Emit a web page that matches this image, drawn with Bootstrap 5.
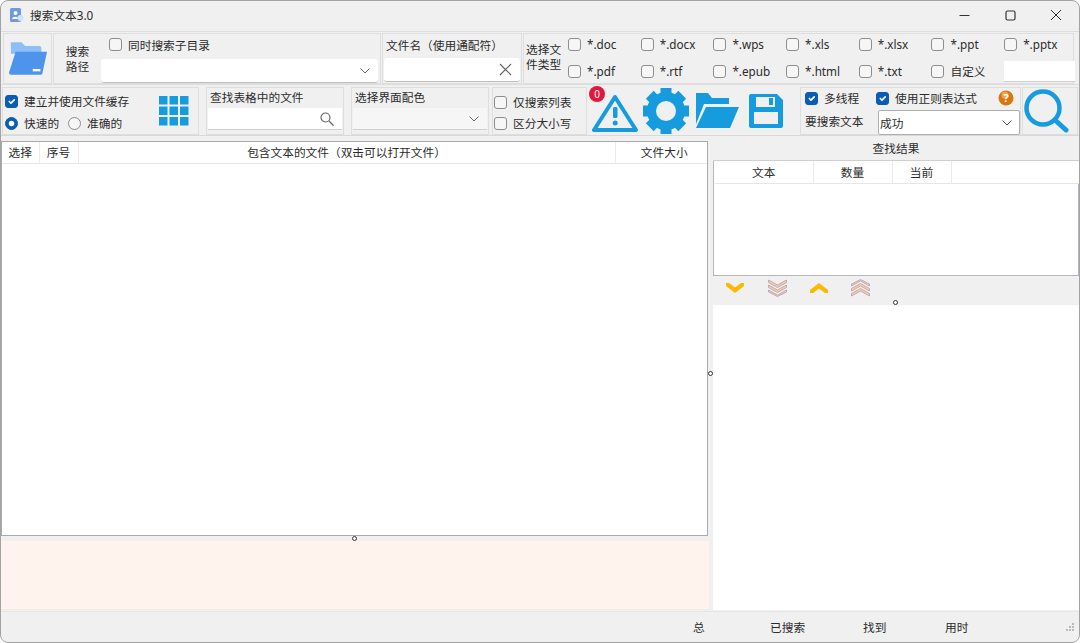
<!DOCTYPE html>
<html lang="zh"><head><meta charset="utf-8"><title>搜索文本3.0</title>
<link rel="stylesheet" href="https://cdn.jsdelivr.net/npm/bootstrap@5.3.0/dist/css/bootstrap.min.css">
<style>
html,body{height:100%;margin:0;background:#fff;overflow:hidden}
body{font:11.7px/16px "Noto Sans","Noto Sans CJK SC",sans-serif;color:#2b2b2b}
.win{width:1080px;height:643px;background:#f0f0f0;border:1px solid #a3a3a3;border-radius:8px;overflow:hidden;position:relative}
.ttl{height:30px;padding:0 0 2px 8px;gap:5px}
.wb{width:46px;height:28px}
.strip{height:54px;padding:1px 3px 0 2px;gap:1px;border-top:1px solid #ddd;border-bottom:1px solid #ddd}
.strip2{height:50px;padding:1px 0 0 1px;border-bottom:1px solid #d8d8d8;margin-top:1px}
.pn{background:#f0f0f0;border:1px solid #dedede;flex:none}
.pnf{width:49px}
.pnp{width:328px;padding:2px 2px 2px 0}
.lbl2{width:47px;text-align:center;line-height:15px}
.subck{height:17px;margin-bottom:6px;margin-left:8px}
.pnn{width:140px;padding:1px}
.pnnt{height:23px;line-height:20px;padding-left:2px}
.pnt{width:551px;padding-top:0}
.typel{width:44px;line-height:15px;padding-left:2px;margin-top:8px;flex:none}
.tgrid{display:grid;grid-template-columns:repeat(6,72.7px) 71px;grid-template-rows:20px 34px;align-items:center}
.ck{gap:6px;white-space:nowrap;display:flex;align-items:center;line-height:16px}
.ck .form-check-input{width:13px;height:13px;margin:0;border:1px solid #8d8d8d;border-radius:3px;background-color:#f6f6f6;flex:none}
.ck .form-check-input[type=radio]{border-radius:50%}
.ck .form-check-input:checked{background-color:#0a5cb4;border-color:#0a5cb4}
.inp{background:#fff;height:24px;border-bottom:1px solid #bdbdbd;border-radius:3px;padding:0 8px 0 5px;display:flex;align-items:center;justify-content:space-between}
.inp2{background:#fff;height:22px;border-bottom:1px solid #cfcfcf;padding:0 8px 0 5px;display:flex;align-items:center;justify-content:flex-end}
.inp2s{height:21px}
.inpc{background:#f6f6f6}
.cmb{width:142px;height:25px;border:1px solid #aeaeae;border-radius:2px;padding:0 7px 0 1px}
.p1{width:197px;padding:2px 0 0 2px;margin-right:7px}
.ckh{height:22px}
.rad{margin-top:3px;gap:9px}
.gridi{margin:6px 9px 0 0;flex:none}
.p2{width:138px;padding:1px;margin-right:7px}
.p3{width:138px;padding:1px;margin-right:3px}
.ptl{height:19px;line-height:16px;padding-left:2px}
.p4{width:95px;padding:4px 0 0 1px;margin-right:3px}
.ck20{height:20px}
.ck18{height:18px;margin-top:2px}
.tools{width:210px;position:relative;padding-left:2px;flex:none}
.t2{margin-left:5px}.t3{margin-left:6px}.t4{margin-left:9px}
.p6{width:221px;padding:0 0 0 4px}
.r20{height:20px}
.r2{margin-top:2px}
.l73{width:73px;margin-bottom:4px}
.ms17{margin-left:17px}
.help{margin-right:6px;margin-left:auto}
.p7{width:56px;margin-left:1px;padding:1px 0 0 1px}
.main{height:475px}
.lft{width:709px;flex:none}
.tb1{height:395px;margin:5px 0 0 0;background:#fff;border:1px solid #a9a9a9;width:707px}
.tb1 table,.tb2 table{table-layout:fixed;margin:0;border-collapse:collapse}
.tb1 th,.tb2 th{font-weight:400;font-size:11.7px;text-align:center;vertical-align:middle;padding:0;color:#2b2b2b;border:0;border-right:1px solid #eaeaea;border-bottom:1px solid #e6e6e6;background:#fff}
.tb1 th{height:21px}
.tb2 th{height:22px}
.w705{width:705px}.w364{width:364px}
.c37{width:37px}.c39{width:39px}.c537{width:537px}
.c98{width:98px}.c79{width:79px}.c59{width:59px}
.lastc{border-right:0!important}
.tb1 th.lastf{padding-left:6px;border-right:0}
.peach{height:69px;margin-top:5px;background:#fff3ee;border-bottom:1px solid #f3ebe8;width:708px}
.rgt{width:366px;margin-left:3px;flex:none}
.rh{height:25px;border-bottom:1px solid #cfcfcf;text-align:center;line-height:24px}
.tb2{height:115px;background:#fff;border:1px solid #b5b5bd;border-top:0;padding:0 1px}
.tl2{height:29px;padding:0 0 5px 12px}
.tl2 svg{margin-right:23px}
.tl2 svg.sq{margin-right:22px}
.wh{height:305px;background:#fff}
.stat{height:31px;border-top:1px solid #e6e6e6;position:relative}
.stat span{flex:none}
.s1{margin-left:692px;width:77px}.s2{width:93px}.s3{width:81px}.s4{margin-left:1px}
.dot{position:absolute;width:5px;height:5px;border:1.2px solid #333;border-radius:50%;background:#fff}
.d1{left:351px;top:535px}.d2{left:707px;top:370px}.d3{left:892px;top:299px}
.bdg{position:absolute;left:-1px;top:-1px;width:16px;height:16px;border-radius:50%;background:#e0183c;color:#fff;font-size:10px;line-height:16px;text-align:center}
</style></head><body>
<div class="win d-flex flex-column">
 <div class="ttl d-flex align-items-center">
  <svg width="16" height="16" viewBox="0 0 16 16"><rect x="1" y="1" width="11" height="14" rx="1.5" fill="#6d9bdc"/><circle cx="6.5" cy="6" r="2" fill="#fff"/><path d="M3 12c.5-3 6-3 6.500 0z" fill="#fff"/><circle cx="11.500" cy="11" r="3" fill="#cfe3f7"/></svg>
  <span>搜索文本3.0</span>
  <div class="ms-auto d-flex">
   <div class="wb d-flex align-items-center justify-content-center"><svg width="11" height="11"><path d="M.5 5.500h10" stroke="#333"/></svg></div>
   <div class="wb d-flex align-items-center justify-content-center"><svg width="11" height="11"><rect x="1" y="1" width="9" height="9" rx="1.500" fill="none" stroke="#333" stroke-width="1.200"/></svg></div>
   <div class="wb d-flex align-items-center justify-content-center"><svg width="12" height="12"><path d="M1 1l10 10M11 1L1 11" stroke="#333"/></svg></div>
  </div>
 </div>

 <div class="strip d-flex">
  <div class="pn pnf d-flex align-items-center justify-content-center">
   <svg width="40" height="35" viewBox="0 0 42 36"><path d="M3 1h11l4 4h15a2 2 0 0 1 2 2v6H3z" fill="#8fbdf8"/><path d="M8 11h33l-5 23a2 2 0 0 1-2 1H3a2 2 0 0 1-2-2z" fill="#4f94ec"/><rect x="26" y="29" width="8" height="2.500" fill="#fff"/></svg>
  </div>
  <div class="pn pnp d-flex">
   <div class="lbl2 align-self-center">搜索<br>路径</div>
   <div class="flex-grow-1">
    <label class="ck subck"><input class="form-check-input" type="checkbox">同时搜索子目录</label>
    <div class="inp"><span></span><svg width="10" height="6"><path d="M.5.500L5 5l4.500-4.500" fill="none" stroke="#666"/></svg></div>
   </div>
  </div>
  <div class="pn pnn">
   <div class="pnnt">文件名（使用通配符）</div>
   <div class="inp"><span></span><svg width="13" height="13"><path d="M1 1l11 11M12 1L1 12" stroke="#666" stroke-width="1.200"/></svg></div>
  </div>
  <div class="pn pnt d-flex">
   <div class="typel">选择文<br>件类型</div>
   <div class="tgrid">
    <label class="ck"><input class="form-check-input" type="checkbox">*.doc</label>
    <label class="ck"><input class="form-check-input" type="checkbox">*.docx</label>
    <label class="ck"><input class="form-check-input" type="checkbox">*.wps</label>
    <label class="ck"><input class="form-check-input" type="checkbox">*.xls</label>
    <label class="ck"><input class="form-check-input" type="checkbox">*.xlsx</label>
    <label class="ck"><input class="form-check-input" type="checkbox">*.ppt</label>
    <label class="ck"><input class="form-check-input" type="checkbox">*.pptx</label>
    <label class="ck"><input class="form-check-input" type="checkbox">*.pdf</label>
    <label class="ck"><input class="form-check-input" type="checkbox">*.rtf</label>
    <label class="ck"><input class="form-check-input" type="checkbox">*.epub</label>
    <label class="ck"><input class="form-check-input" type="checkbox">*.html</label>
    <label class="ck"><input class="form-check-input" type="checkbox">*.txt</label>
    <label class="ck"><input class="form-check-input" type="checkbox">自定义</label>
    <div class="inp2 inp2s"></div>
   </div>
  </div>
 </div>

 <div class="strip2 d-flex">
  <div class="pn p1 d-flex">
   <div class="flex-grow-1">
    <label class="ck ckh"><input class="form-check-input" type="checkbox" checked>建立并使用文件缓存</label>
    <div class="d-flex rad">
     <label class="ck"><input class="form-check-input" type="radio" name="m" checked>快速的</label>
     <label class="ck"><input class="form-check-input" type="radio" name="m">准确的</label>
    </div>
   </div>
   <svg width="30" height="30" viewBox="0 0 30 30" class="gridi" fill="#179bdf"><rect width="8.500" height="8.500"/><rect x="10.500" width="8.500" height="8.500"/><rect x="21" width="8.500" height="8.500"/><rect y="10.500" width="8.500" height="8.500"/><rect x="10.500" y="10.500" width="8.500" height="8.500"/><rect x="21" y="10.500" width="8.500" height="8.500"/><rect y="21" width="8.500" height="8.500"/><rect x="10.500" y="21" width="8.500" height="8.500"/><rect x="21" y="21" width="8.500" height="8.500"/></svg>
  </div>
  <div class="pn p2">
   <div class="ptl">查找表格中的文件</div>
   <div class="inp2"><svg width="14" height="14" viewBox="0 0 14 14" fill="none" stroke="#666" stroke-width="1.200"><circle cx="5.500" cy="5.500" r="4.500"/><path d="M9 9l4.500 4.500"/></svg></div>
  </div>
  <div class="pn p3">
   <div class="ptl">选择界面配色</div>
   <div class="inp2 inpc"><svg width="10" height="6"><path d="M.5.500L5 5l4.500-4.500" fill="none" stroke="#666"/></svg></div>
  </div>
  <div class="pn p4">
   <label class="ck ck20"><input class="form-check-input" type="checkbox">仅搜索列表</label>
   <label class="ck ck18"><input class="form-check-input" type="checkbox">区分大小写</label>
  </div>
  <div class="tools d-flex align-items-center">
   <span class="bdg">0</span>
   <svg width="46" height="38" viewBox="0 0 46 38" class="mt-1"><path d="M23 3L2 36h42z" fill="none" stroke="#179bdf" stroke-width="4" stroke-linejoin="round"/><rect x="21" y="13" width="4.500" height="11" rx="1.500" fill="#179bdf"/><circle cx="23.200" cy="29" r="2.500" fill="#179bdf"/></svg>
   <svg width="46" height="46" viewBox="0 0 46 46" class="t2" fill="#179bdf"><circle cx="23" cy="23" r="14.500" fill="none" stroke="#179bdf" stroke-width="9"/><g id="gt"><rect x="17.500" y="0" width="11" height="9"/><rect x="17.500" y="0" width="11" height="9" transform="rotate(45 23 23)"/><rect x="17.500" y="0" width="11" height="9" transform="rotate(90 23 23)"/><rect x="17.500" y="0" width="11" height="9" transform="rotate(135 23 23)"/><rect x="17.500" y="0" width="11" height="9" transform="rotate(180 23 23)"/><rect x="17.500" y="0" width="11" height="9" transform="rotate(225 23 23)"/><rect x="17.500" y="0" width="11" height="9" transform="rotate(270 23 23)"/><rect x="17.500" y="0" width="11" height="9" transform="rotate(315 23 23)"/></g></svg>
   <svg width="44" height="36" viewBox="0 0 44 36" class="t3" fill="#179bdf"><path d="M1 0h12l4 5h17v6H9L1 31z"/><path d="M11 14h33l-9 21H1z"/></svg>
   <svg width="36" height="36" viewBox="0 0 36 36" class="t4"><path fill="#179bdf" fill-rule="evenodd" d="M3 1h26l6 6v26a2 2 0 0 1-2 2H3a2 2 0 0 1-2-2V3a2 2 0 0 1 2-2zM8 4v10h19V4zM21 5h4v7h-4zM6 19v12h24V19z"/></svg>
  </div>
  <div class="pn p6">
   <div class="d-flex align-items-center r20">
    <label class="ck"><input class="form-check-input" type="checkbox" checked>多线程</label>
    <label class="ck ms17"><input class="form-check-input" type="checkbox" checked>使用正则表达式</label>
    <svg width="16" height="16" viewBox="0 0 16 16" class="help"><circle cx="8" cy="8" r="7.500" fill="#d9760f"/><circle cx="7" cy="5" r="3.500" fill="#f0a550"/><text x="8" y="12" font-size="11" font-weight="700" text-anchor="middle" fill="#fff">?</text></svg>
   </div>
   <div class="d-flex align-items-center r2">
    <span class="l73">要搜索文本</span>
    <div class="inp cmb"><span>成功</span><svg width="10" height="6"><path d="M.5.500L5 5l4.500-4.500" fill="none" stroke="#555"/></svg></div>
   </div>
  </div>
  <div class="pn p7">
   <svg width="46" height="44" viewBox="0 0 46 44"><circle cx="19" cy="19" r="16.500" fill="none" stroke="#179bdf" stroke-width="4.500"/><path d="M31 31l11 10" stroke="#179bdf" stroke-width="5" stroke-linecap="round"/></svg>
  </div>
 </div>

 <div class="main d-flex">
  <div class="lft">
   <div class="tb1">
    <table class="table table-borderless w705"><colgroup><col class="c37"><col class="c39"><col class="c537"><col></colgroup>
     <thead><tr><th>选择</th><th>序号</th><th>包含文本的文件（双击可以打开文件）</th><th class="lastf">文件大小</th></tr></thead></table>
   </div>
   <div class="peach"></div>
  </div>
  <div class="rgt">
   <div class="rh">查找结果</div>
   <div class="tb2">
    <table class="table table-borderless w364"><colgroup><col class="c98"><col class="c79"><col class="c59"><col></colgroup>
     <thead><tr><th>文本</th><th>数量</th><th>当前</th><th class="lastc"></th></tr></thead></table>
   </div>
   <div class="tl2 d-flex align-items-center">
    <svg width="20" height="12" viewBox="0 0 18 12"><path d="M0 1h3l6 4.500L15 1h3v3l-9 7-9-7z" fill="#fdb900"/></svg>
    <svg class="sq" width="19" height="18" viewBox="0 0 18 18" fill="#fbd08a" stroke="#b09ac8" stroke-width=".8"><path d="M0 1l9 5 9-5v2.500L9 8.500 0 3.500zM0 6l9 5 9-5v2.500l-9 5-9-5zM0 11l9 5 9-5v2l-9 4.500L0 13z"/></svg>
    <svg class="sq" width="20" height="12" viewBox="0 0 18 12"><path d="M0 11h3l6-4.500 6 4.500h3V8L9 1 0 8z" fill="#fdb900"/></svg>
    <svg width="19" height="18" viewBox="0 0 18 18" fill="#fbd08a" stroke="#b09ac8" stroke-width=".8"><path d="M0 17l9-5 9 5v-2.500l-9-5-9 5zM0 12l9-5 9 5V9.500l-9-5-9 5zM0 7l9-5 9 5V5L9 .5 0 5z"/></svg>
   </div>
   <div class="wh"></div>
  </div>
 </div>

 <div class="stat d-flex align-items-center">
  <span class="s1">总</span>
  <span class="s2">已搜索</span>
  <span class="s3">找到</span>
  <span class="s4">用时</span>
  <svg class="ms-auto me-1" width="11" height="11" fill="#bbb"><rect x="8" y="1" width="2" height="2"/><rect x="5" y="4" width="2" height="2"/><rect x="8" y="4" width="2" height="2"/><rect x="2" y="7" width="2" height="2"/><rect x="5" y="7" width="2" height="2"/><rect x="8" y="7" width="2" height="2"/></svg>
 </div>
 <span class="dot d1"></span>
 <span class="dot d2"></span>
 <span class="dot d3"></span>
</div>
<script src="https://cdn.jsdelivr.net/npm/bootstrap@5.3.0/dist/js/bootstrap.bundle.min.js"></script>
</body></html>
